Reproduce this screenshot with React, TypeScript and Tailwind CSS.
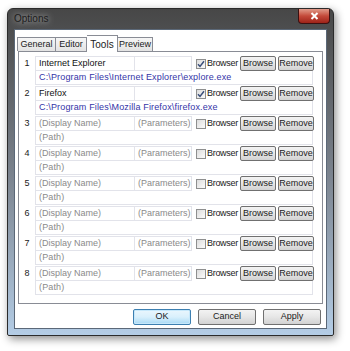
import React from "react";

const rows = [
  { n: 1, name: "Internet Explorer", params: "", checked: true, path: "C:\\Program Files\\Internet Explorer\\explore.exe" },
  { n: 2, name: "Firefox", params: "", checked: true, path: "C:\\Program Files\\Mozilla Firefox\\firefox.exe" },
  { n: 3 }, { n: 4 }, { n: 5 }, { n: 6 }, { n: 7 }, { n: 8 },
] as { n: number; name?: string; params?: string; checked?: boolean; path?: string }[];

function Check({ checked }: { checked?: boolean }) {
  return (
    <div className="w-[10px] h-[10px] border border-[#8e8f8f] bg-gradient-to-br from-[#dcdcdc] to-[#fbfbfb] flex items-center justify-center shrink-0">
      {checked && (
        <svg width="8" height="8" viewBox="0 0 8 8">
          <path d="M1 4.2 L3 6.4 L7 1.2" stroke="#3a4f7a" strokeWidth="1.5" fill="none" />
        </svg>
      )}
    </div>
  );
}

function Btn({ children, w }: { children: React.ReactNode; w: string }) {
  return (
    <div className={`${w} h-[15px] border border-[#707070] rounded-[2px] bg-gradient-to-b from-[#f3f3f3] via-[#e6e6e6] to-[#d2d2d2] flex items-center justify-center text-[9px] text-[#1a1a1a] shrink-0`}>
      {children}
    </div>
  );
}

export default function App() {
  return (
    <div className="w-[350px] h-[351px] bg-white overflow-hidden pt-[8px] pl-[7px]" style={{ fontFamily: '"Liberation Sans", Arial, sans-serif' }}>
      <div className="w-[327px] h-[328px] rounded-t-[6px] rounded-b-[2px] border border-[#2b2b2b] bg-gradient-to-b from-[#474747] via-[#7a828d] to-[#b4cde6] shadow-[2px_3px_8px_rgba(0,0,0,0.45)] flex flex-col">
        <div className="h-[20px] flex justify-between items-start shrink-0">
          <div className="pl-[6px] pt-[4px] text-[10px] text-[#1c1c1c] leading-[12px] [text-shadow:0_0_6px_rgba(255,255,255,0.8)]">Options</div>
          <div className="mr-[3px] w-[32px] h-[15px] rounded-b-[4px] border border-[#3c1010] border-t-0 bg-gradient-to-b from-[#e09a8a] via-[#c4493a] to-[#9e2218] flex items-center justify-center">
            <svg width="9" height="8" viewBox="0 0 9 8">
              <path d="M1.5 1 L7.5 7 M7.5 1 L1.5 7" stroke="white" strokeWidth="2" />
            </svg>
          </div>
        </div>
        <div className="mx-[6px] mb-[6px] flex-1 border border-[#5b6878] bg-white flex flex-col">
          {/* tabs */}
          <div className="flex items-end h-[16px] mt-[5px] ml-[2px] text-[9px] text-[#1a1a1a]">
            <div className="h-[14px] w-[39px] border border-[#898c95] border-b-0 bg-gradient-to-b from-[#f6f6f6] to-[#e3e3e3] flex items-center justify-center">General</div>
            <div className="h-[14px] w-[31px] border border-[#898c95] border-b-0 border-l-0 bg-gradient-to-b from-[#f6f6f6] to-[#e3e3e3] flex items-center justify-center">Editor</div>
            <div className="h-[17px] w-[31px] border border-[#898c95] border-b-0 border-l-0 bg-white flex items-center justify-center mb-[-1px] relative z-10 text-[10px]">Tools</div>
            <div className="h-[14px] w-[35px] border border-[#898c95] border-b-0 border-l-0 bg-gradient-to-b from-[#f6f6f6] to-[#e3e3e3] flex items-center justify-center">Preview</div>
          </div>
          {/* panel */}
          <div className="ml-[3px] w-[305px] h-[253px] border border-[#898c95] bg-white pt-[4px] flex flex-col">
            {rows.map((r) => (
              <div key={r.n} className="h-[30px] flex flex-col">
                <div className="h-[15px] flex items-center">
                  <div className="w-[16px] text-center text-[9px] text-[#1a1a1a] shrink-0">{r.n}</div>
                  <div className={`w-[100px] h-[15px] border border-[#e2e3ea] px-[3px] flex items-center text-[9px] shrink-0 ${r.name ? "text-[#111]" : "text-[#8a8a8a]"}`}>
                    {r.name ?? "(Display Name)"}
                  </div>
                  <div className={`w-[57px] h-[15px] border border-l-0 border-[#e2e3ea] px-[3px] flex items-center text-[9px] shrink-0 overflow-hidden whitespace-nowrap ${r.name ? "" : "text-[#8a8a8a]"}`}>
                    {r.name ? "" : "(Parameters)"}
                  </div>
                  <div className="ml-[4px]"><Check checked={r.checked} /></div>
                  <div className="ml-[1px] text-[9px] text-[#1a1a1a] w-[32px] shrink-0 tracking-[-0.3px] whitespace-nowrap overflow-hidden">Browser</div>
                  <div className="ml-[1px]"><Btn w="w-[36px]">Browse</Btn></div>
                  <div className="ml-[2px]"><Btn w="w-[36px]">Remove</Btn></div>
                </div>
                <div className="h-[15px] flex pl-[16px]">
                  <div className={`w-[278px] h-[14px] border border-t-0 border-[#e2e3ea] px-[3px] flex items-center text-[9px] whitespace-nowrap overflow-hidden tracking-[0.15px] ${r.path ? "text-[#3434a8]" : "text-[#8a8a8a]"}`}>
                    {r.path ?? "(Path)"}
                  </div>
                </div>
              </div>
            ))}
          </div>
          {/* bottom buttons */}
          <div className="flex mt-[5px] ml-[118px] gap-[7px] text-[9px]">
            <div className="w-[58px] h-[16px] rounded-[2px] border border-[#3c7fb1] bg-gradient-to-b from-[#eaf6fd] via-[#d9f0fc] to-[#a7d9f5] shadow-[inset_0_0_0_1px_#c6e8fb] flex items-center justify-center text-[#1a1a1a]">OK</div>
            <div className="w-[58px] h-[16px] rounded-[2px] border border-[#707070] bg-gradient-to-b from-[#f3f3f3] via-[#e6e6e6] to-[#d2d2d2] flex items-center justify-center text-[#1a1a1a]">Cancel</div>
            <div className="w-[58px] h-[16px] rounded-[2px] border border-[#707070] bg-gradient-to-b from-[#f3f3f3] via-[#e6e6e6] to-[#d2d2d2] flex items-center justify-center text-[#1a1a1a]">Apply</div>
          </div>
        </div>
      </div>
    </div>
  );
}
